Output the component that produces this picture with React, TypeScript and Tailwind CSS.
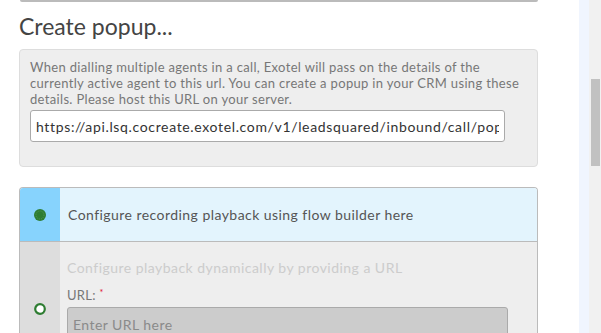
import React from 'react';

const font = { fontFamily: 'Lato, "Open Sans", sans-serif' };

function Radio({ checked }: { checked: boolean }) {
  return (
    <svg width="14" height="14" viewBox="0 0 14 14">
      {checked ? (
        <>
          <circle cx="7" cy="7" r="6" fill="#2e7d32" />
          <circle cx="7" cy="7" r="4" fill="none" stroke="#5a9a5c" strokeWidth="0.8" strokeDasharray="1 1" />
        </>
      ) : (
        <circle cx="7" cy="7" r="4.8" fill="#fff" stroke="#2e7d32" strokeWidth="2.2" />
      )}
    </svg>
  );
}

export default function App() {
  return (
    <div className="flex h-[333px] w-[601px] overflow-hidden bg-white" style={font}>
      <div className="w-[579px] pl-[19px] pr-[41px]">
        {/* previous card edge */}
        <div className="ml-[1px] h-[2px] rounded-b bg-[#bbbbbb]" />

        <h2 className="mt-[9px] text-[23px] leading-[30px] text-[#444]">Create popup...</h2>

        {/* Popup url box */}
        <div className="mt-[8px] h-[118px] rounded-[4px] border border-[#dddddd] bg-[#eeeeee] px-[10px] pt-[9px]">
          <p className="whitespace-nowrap text-[13px] leading-[16px] tracking-[0.33px] text-[#777]">
            When dialling multiple agents in a call, Exotel will pass on the details of the
            <br />
            currently active agent to this url. You can create a popup in your CRM using these
            <br />
            details. Please host this URL on your server.
          </p>
          <input
            readOnly
            value="https://api.lsq.cocreate.exotel.com/v1/leadsquared/inbound/call/popup"
            className="mt-[3px] h-[32px] w-[475px] rounded-[3px] border border-[#aaaaaa] bg-white px-[5px] text-[14px] tracking-[0.65px] text-[#333] outline-none"
          />
        </div>

        {/* Recording playback options */}
        <div className="mt-[20px] overflow-hidden rounded-t-[4px] border border-b-0 border-[#bbbbbb]">
          <div className="flex h-[54px] border-b border-[#bbbbbb]">
            <div className="flex w-[40px] items-center justify-center bg-[#87d3fd]">
              <Radio checked />
            </div>
            <div className="flex flex-1 items-center bg-[#e3f4fd] pb-[1px] pl-[8px] text-[14px] tracking-[0.45px] text-[#555]">
              Configure recording playback using flow builder here
            </div>
          </div>
          <div className="flex h-[120px]">
            <div className="flex w-[40px] justify-center bg-[#dddddd] pt-[60px]">
              <Radio checked={false} />
            </div>
            <div className="flex-1 bg-[#eeeeee] pl-[7px] pr-[29px]">
              <p className="mt-[17px] text-[14px] leading-[18px] tracking-[0.47px] text-[#cccccc]">
                Configure playback dynamically by providing a URL
              </p>
              <label className="mt-[10px] block text-[13px] leading-[16px] tracking-[0.3px] text-[#777]">
                URL: <span className="relative -top-[4px] text-[9px] text-[#e0102a]">*</span>
              </label>
              <input
                placeholder="Enter URL here"
                className="mt-[2px] h-[34px] w-full rounded-[3px] border border-[#aaaaaa] bg-[#cccccc] px-[5px] text-[14px] tracking-[0.45px] text-[#555] outline-none placeholder:text-[#8a8a8a]"
              />
            </div>
          </div>
        </div>
      </div>

      <div className="w-[10px] bg-[#f0f5fe]" />
      <div className="w-[12px] bg-[#f1f1f1] pl-[2px]">
        <div className="mt-[79px] h-[87px] w-[9px] bg-[#c1c1c1]" />
      </div>
    </div>
  );
}
